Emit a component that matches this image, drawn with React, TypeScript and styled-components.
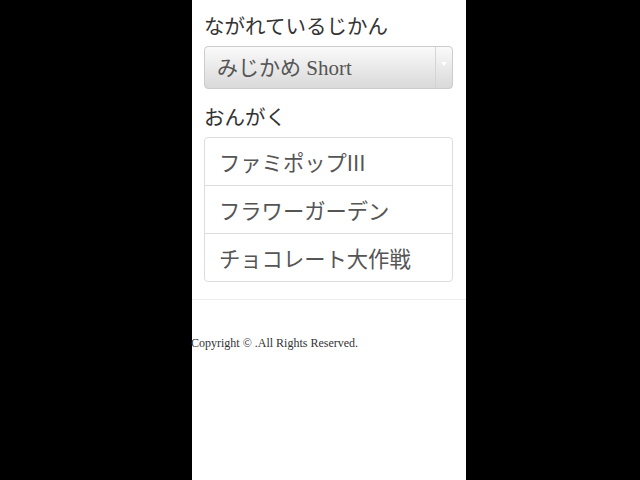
import styled, { createGlobalStyle } from "styled-components"

const GlobalStyle = createGlobalStyle`
    html, body {
        margin: 0;
        padding: 0;
        background: #000;
        height: 100%;
    }
    #root {
        height: 100%;
    }
`

const Page = styled.div`
    margin-left: 192px;
    width: 274px;
    min-height: 480px;
    background: #fff;
    padding-top: 11px;
    box-sizing: border-box;
`

const Content = styled.div`
    padding: 0 13px 0 12px;
`

const Label = styled.div`
    font-family: "Noto Sans CJK JP", "Noto Sans", sans-serif;
    font-size: 20.5px;
    line-height: 28px;
    color: #333;
    margin-bottom: 7px;
`

const Select = styled.div`
    display: flex;
    height: 43px;
    box-sizing: border-box;
    border: 1px solid #ccc;
    border-radius: 4px;
    background: linear-gradient(#fafafa, #d9d9d9);
    margin-bottom: 13px;
`

const SelectText = styled.div`
    flex: 1;
    padding-left: 12px;
    font-family: "Liberation Serif", "Noto Sans CJK JP", serif;
    font-size: 21px;
    line-height: 43px;
    color: #555;
`

const Arrow = styled.div`
    width: 17px;
    border-left: 1px solid #d4d4d4;
    display: flex;
    justify-content: center;
    padding-top: 15px;
    box-sizing: border-box;
    &::after {
        content: "";
        border-left: 3px solid transparent;
        border-right: 3px solid transparent;
        border-top: 4px solid #fff;
        height: 0;
    }
`

const ListGroup = styled.ul`
    list-style: none;
    margin: 0;
    padding: 0;
    border: 1px solid #ddd;
    border-radius: 4px;
`

const ListItem = styled.li`
    font-family: "Noto Sans CJK JP", "Noto Sans", sans-serif;
    font-size: 21.3px;
    line-height: 47px;
    padding-left: 14px;
    color: #555;
    border-top: 1px solid #ddd;
    &:first-child {
        border-top: none;
    }
`

const Divider = styled.hr`
    margin: 17px 0 0;
    border: none;
    border-top: 1px solid #eee;
`

const Copyright = styled.p`
    margin: 36px 0 0 -1px;
    font-family: "Liberation Serif", serif;
    font-size: 12px;
    color: #333;
`

const songs = ["ファミポップIII", "フラワーガーデン", "チョコレート大作戦"]

export default function App() {
    return (
        <>
            <GlobalStyle />
            <Page>
                <Content>
                    <Label>ながれているじかん</Label>
                    <Select>
                        <SelectText>みじかめ Short</SelectText>
                        <Arrow />
                    </Select>
                    <Label>おんがく</Label>
                    <ListGroup>
                        {songs.map((s) => (
                            <ListItem key={s}>{s}</ListItem>
                        ))}
                    </ListGroup>
                </Content>
                <Divider />
                <Copyright>Copyright © .All Rights Reserved.</Copyright>
            </Page>
        </>
    )
}
